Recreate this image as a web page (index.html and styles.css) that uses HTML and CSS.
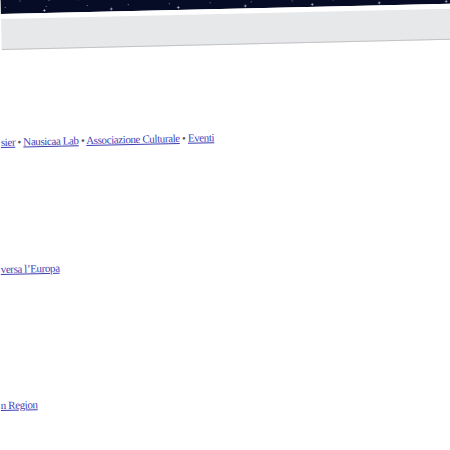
FILE: index.html
```html
<!DOCTYPE html>
<html lang="it">
<head>
<meta charset="utf-8">
<title>Nausicaa</title>
<link rel="stylesheet" href="styles.css">
</head>
<body>
<div class="page">
  <div class="sky"></div>
  <div class="gap"></div>
  <div class="bar"></div>
  <div class="content">
    <p class="line line1"><a href="#">sier</a> • <a href="#">Nausicaa Lab</a> • <a href="#">Associazione Culturale</a> • <a href="#">Eventi</a></p>
    <p class="line line2"><a href="#">versa l’Europa</a></p>
    <p class="line line3"><a href="#">n Region</a></p>
  </div>
</div>
</body>
</html>
```
FILE: styles.css
```css
html, body {
  margin: 0;
  padding: 0;
  background: #ffffff;
  overflow: hidden;
  width: 450px;
  height: 450px;
}
.page {
  width: 520px;
  transform-origin: 0 0;
  transform: rotate(-1.3deg);
  font-family: "Liberation Serif", "Times New Roman", serif;
}
.sky {
  height: 40px;
  margin-top: -26px;
  background-color: #060b26;
  background-image:
    radial-gradient(circle, rgba(255,255,255,0.8) 0.8px, transparent 1.2px),
    radial-gradient(circle, rgba(200,210,255,0.6) 0.6px, transparent 1px),
    radial-gradient(circle, rgba(255,255,255,0.5) 0.5px, transparent 1px);
  background-size: 67px 23px, 41px 17px, 29px 31px;
  background-position: 10px 3px, 25px 8px, 5px 12px;
}
.gap {
  height: 5px;
  background: #ffffff;
}
.bar {
  height: 30px;
  background: #e7e8ea;
  border-bottom: 1px solid #c3c3c5;
}
.content {
  padding-top: 85px;
}
.line {
  margin: 0;
  font-size: 11px;
  line-height: 14px;
  letter-spacing: -0.4px;
  color: #555566;
  white-space: nowrap;
}
.line a {
  color: #3f3fb5;
  text-decoration: underline;
}
.line1 {
  margin-left: -3px;
}
.line2 {
  margin-top: 113px;
  margin-left: -6px;
}
.line3 {
  margin-top: 122px;
  margin-left: -9px;
}
```
